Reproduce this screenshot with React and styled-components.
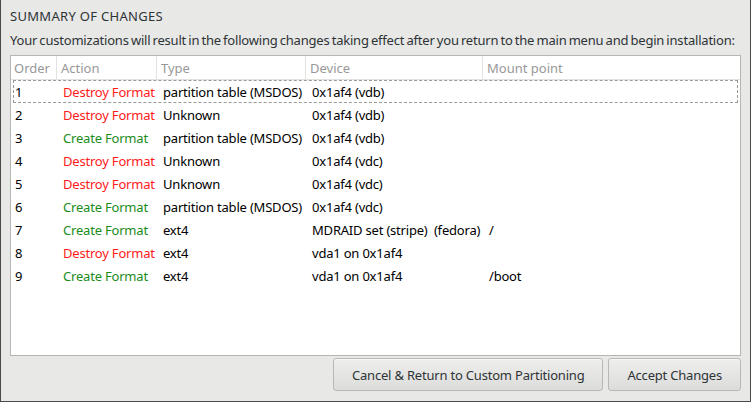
import styled, { createGlobalStyle } from "styled-components";

const Global = createGlobalStyle`
  html, body { margin: 0; padding: 0; }
  body {
    width: 751px;
    height: 402px;
    overflow: hidden;
    background: #e8e8e7;
    font-family: "Noto Sans", "DejaVu Sans", sans-serif;
    font-size: 13px;
    color: #2e3436;
  }
`;

const Dialog = styled.div`
  box-sizing: border-box;
  width: 751px;
  height: 402px;
  background: #e8e8e7;
  border: 1px solid #4a4a4a;
  border-top: none;
  display: flex;
  flex-direction: column;
  padding: 0 9px 10px 9px;
`;

const Title = styled.h1`
  margin: 0;
  font-size: 13px;
  font-weight: normal;
  line-height: 16px;
  padding-top: 8px;
  letter-spacing: 0.3px;
  color: #2e3436;
`;

const Subtitle = styled.p`
  margin: 0;
  line-height: 16px;
  padding-top: 8px;
  letter-spacing: -0.2px;
  word-spacing: -1px;
  color: #2e3436;
  white-space: nowrap;
`;

const TableBox = styled.div`
  margin-top: 7px;
  flex: 1;
  background: #fff;
  border: 1px solid #b6b6b3;
  display: flex;
  flex-direction: column;
`;

const Row = styled.div`
  display: grid;
  grid-template-columns: 45px 100px 149px 177px 1fr;
  height: 23px;
  align-items: center;
  margin: 0 2px;
  box-sizing: border-box;
  border: 1px ${(p) => (p.$focused ? "dashed #9a9a9a" : "solid transparent")};
  color: #000;
  letter-spacing: -0.2px;
`;

const HeadRow = styled.div`
  display: grid;
  grid-template-columns: 46px 100px 149px 177px 1fr;
  height: 24px;
  border-bottom: 1px solid #e2e2e0;
  box-sizing: border-box;
`;

const HeadCell = styled.div`
  display: flex;
  align-items: center;
  padding-left: ${(p) => (p.$first ? "3px" : "4px")};
  color: #989898;
  border-right: ${(p) => (p.$last ? "none" : "1px solid #e2e2e0")};
`;

const Cell = styled.div`
  padding-left: ${(p) => (p.$first ? "1px" : "4px")};
  white-space: pre;
  color: ${(p) =>
    p.$action === "destroy" ? "#ff1a1a" : p.$action === "create" ? "#1b8c1b" : "#000"};
`;

const Footer = styled.div`
  display: flex;
  justify-content: flex-end;
  gap: 5px;
  margin-top: 2px;
`;

const Button = styled.button`
  height: 33px;
  padding: 0 18px;
  font-family: inherit;
  font-size: 13px;
  letter-spacing: -0.2px;
  color: #2e3436;
  border: 1px solid #b8b8b5;
  border-radius: 3px;
  background: linear-gradient(#eeeeed, #dcdcdb);
  box-shadow: inset 0 1px 0 #f7f7f6;
`;

const changes = [
  ["1", "destroy", "partition table (MSDOS)", "0x1af4 (vdb)", ""],
  ["2", "destroy", "Unknown", "0x1af4 (vdb)", ""],
  ["3", "create", "partition table (MSDOS)", "0x1af4 (vdb)", ""],
  ["4", "destroy", "Unknown", "0x1af4 (vdc)", ""],
  ["5", "destroy", "Unknown", "0x1af4 (vdc)", ""],
  ["6", "create", "partition table (MSDOS)", "0x1af4 (vdc)", ""],
  ["7", "create", "ext4", "MDRAID set (stripe)  (fedora)", "/"],
  ["8", "destroy", "ext4", "vda1 on 0x1af4", ""],
  ["9", "create", "ext4", "vda1 on 0x1af4", "/boot"],
];

export default function App() {
  return (
    <>
      <Global />
      <Dialog>
        <Title>SUMMARY OF CHANGES</Title>
        <Subtitle>
          Your customizations will result in the following changes taking effect after you return to the main menu and begin installation:
        </Subtitle>
        <TableBox>
          <HeadRow>
            <HeadCell $first>Order</HeadCell>
            <HeadCell>Action</HeadCell>
            <HeadCell>Type</HeadCell>
            <HeadCell>Device</HeadCell>
            <HeadCell $last>Mount point</HeadCell>
          </HeadRow>
          {changes.map(([order, action, type, device, mount], i) => (
            <Row key={order} $focused={i === 0}>
              <Cell $first>{order}</Cell>
              <Cell $action={action}>
                {action === "destroy" ? "Destroy Format" : "Create Format"}
              </Cell>
              <Cell>{type}</Cell>
              <Cell>{device}</Cell>
              <Cell>{mount}</Cell>
            </Row>
          ))}
        </TableBox>
        <Footer>
          <Button>Cancel &amp; Return to Custom Partitioning</Button>
          <Button>Accept Changes</Button>
        </Footer>
      </Dialog>
    </>
  );
}
